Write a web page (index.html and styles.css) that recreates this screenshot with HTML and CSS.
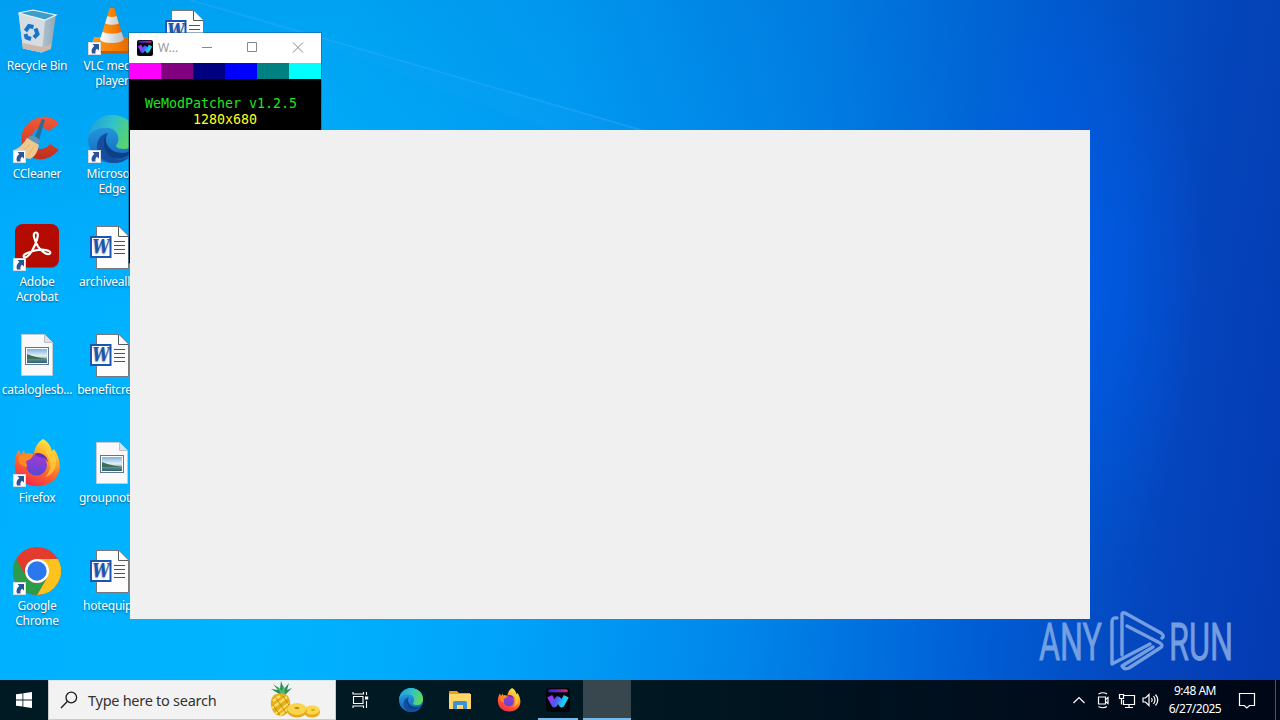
FILE: index.html
```html
<!DOCTYPE html>
<html lang="en">
<head>
    <meta charset="UTF-8">
    <meta name="viewport" content="width=device-width, initial-scale=1.0">
    <title>Desktop</title>
    <link rel="stylesheet" href="styles.css">
</head>
<body>
    <!-- shared icons -->
    <svg class="sprite" width="0" height="0">
        <defs>
            <linearGradient id="binSide" x1="0" x2="1">
                <stop offset="0" stop-color="#c3d3dc"/>
                <stop offset=".6" stop-color="#b3c4ce"/>
                <stop offset="1" stop-color="#8fa9b8"/>
            </linearGradient>
            <linearGradient id="coneOrange" x1="0" x2="1">
                <stop offset="0" stop-color="#ff9a1f"/>
                <stop offset=".6" stop-color="#f57c00"/>
                <stop offset="1" stop-color="#d85f00"/>
            </linearGradient>
            <linearGradient id="coneWhite" x1="0" x2="1">
                <stop offset="0" stop-color="#ffffff"/>
                <stop offset="1" stop-color="#b9bec2"/>
            </linearGradient>
            <linearGradient id="ccRed" x1="0" y1="0" x2="0" y2="1">
                <stop offset="0" stop-color="#f25a38"/>
                <stop offset="1" stop-color="#bf2d1d"/>
            </linearGradient>
            <linearGradient id="edgeTop" x1="0" y1=".2" x2="1" y2=".5">
                <stop offset="0" stop-color="#1d9de0"/>
                <stop offset=".5" stop-color="#31c3c6"/>
                <stop offset="1" stop-color="#62d957"/>
            </linearGradient>
            <linearGradient id="edgeLeft" x1="0" y1="0" x2="0" y2="1">
                <stop offset="0" stop-color="#2aa9e6"/>
                <stop offset="1" stop-color="#1263bd"/>
            </linearGradient>
            <linearGradient id="ffBody" x1=".8" y1="0" x2=".3" y2="1">
                <stop offset="0" stop-color="#fff44f"/>
                <stop offset=".3" stop-color="#ffb42c"/>
                <stop offset=".6" stop-color="#ff6a2a"/>
                <stop offset="1" stop-color="#f0264f"/>
            </linearGradient>
            <linearGradient id="ffGlobe" x1="0" y1="0" x2="0" y2="1">
                <stop offset="0" stop-color="#a23ad8"/>
                <stop offset="1" stop-color="#5b48cf"/>
            </linearGradient>
            <linearGradient id="photo" x1="0" y1="0" x2="0" y2="1">
                <stop offset="0" stop-color="#7eb2df"/>
                <stop offset=".5" stop-color="#e6f2f7"/>
                <stop offset=".75" stop-color="#5c8a8c"/>
                <stop offset="1" stop-color="#2c5e78"/>
            </linearGradient>
            <linearGradient id="wemodGrad" gradientUnits="userSpaceOnUse" x1="3" x2="29" y1="10" y2="20">
                <stop offset="0" stop-color="#b72cf5"/>
                <stop offset=".45" stop-color="#4f59f6"/>
                <stop offset=".75" stop-color="#1fc3f2"/>
                <stop offset="1" stop-color="#12e6e0"/>
            </linearGradient>
            <linearGradient id="wemodBar" gradientUnits="userSpaceOnUse" x1="4" x2="28" y1="4" y2="4">
                <stop offset="0" stop-color="#3b1fd0"/>
                <stop offset=".5" stop-color="#7422c9"/>
                <stop offset="1" stop-color="#e0225a"/>
            </linearGradient>

            <symbol id="shortcut" viewBox="0 0 13 13">
                <rect x=".5" y=".5" width="12" height="12" fill="#fff" stroke="#d5dbe1"/>
                <path d="M4.500 2h6.500v6.500L9 6.800C7.800 7.600 7.200 9 7.500 11.500H4C2.800 8.500 4 5.800 6.300 4z" fill="#2a5596"/>
            </symbol>

            <symbol id="bin" viewBox="0 0 48 48">
                <path d="M5.500 6L20 3l23 5-5 34-10 3.500-18-4z" fill="url(#binSide)"/>
                <path d="M5.500 6L20 3l23 5-11 5z" fill="#3f9cc8"/>
                <path d="M5.500 6L32 13l-3 32.500-19-4z" fill="#d5dde3"/>
                <path d="M9.500 36l20 4-.5 5.500-19-4zM29.500 40l9-3-.7 5-8.800 3.500z" fill="#cdb8aa"/>
                <path d="M5.500 6L32 13l11-5-23-5z" fill="none" stroke="#e8f4fa" stroke-width="1.200"/>
                <g fill="none" stroke="#1674cb" stroke-width="4">
                    <path d="M12.500 24l3.500-5 4.500 1"/>
                    <path d="M22.500 21.500l2 5.500-3.500 3.500"/>
                    <path d="M18 32l-4.500-1.500-1-3.500"/>
                </g>
            </symbol>

            <symbol id="vlc" viewBox="0 0 48 48">
                <path d="M6 30h36l5 16H1z" fill="url(#coneOrange)"/>
                <path d="M1 44h46v2.500H1z" fill="#c65a00"/>
                <path d="M21.500 1.500q2.500-1.500 5 0L36 33q-1 4-12 4T12 33z" fill="url(#coneOrange)"/>
                <path d="M19.500 9q4.500 1.800 9 0l2.300 7.500q-6.800 2.500-13.600 0zM14.500 25q9.500 3.500 19 0L36 32q-1 4-12 4t-12-4z" fill="url(#coneWhite)"/>
            </symbol>

            <symbol id="ccleaner" viewBox="0 0 48 48">
                <path d="M46 9Q37-2 24 3 10 8 8.500 22 8 37 20 43q14 5 26-8l-9-6q-6 7-13 4-6-4-5-12 2-8 9-8 5 0 8 3z" fill="url(#ccRed)"/>
                <path d="M29 4l3 1-7 23-5-2z" fill="#2a6c9b"/>
                <path d="M17 21q6-1 10 5l-3 6-12-7z" fill="#5b97bb"/>
                <path d="M14 23l12 7q-2 11-9 14Q7 43 1 35q8-3 13-12z" fill="#f0c88e"/>
                <path d="M17 29l-9 9M21 31l-7 11" stroke="#e4b673" stroke-width="1"/>
            </symbol>

            <symbol id="edge" viewBox="0 0 48 48">
                <circle cx="24" cy="24" r="24" fill="url(#edgeLeft)"/>
                <path d="M0 24C1 10 11 0 24 0c14 0 24 10 24 22 0 8-6 12-12 12-8 0-9-3-7-5 3-4 2-14-8-16C10 12 2 16 0 24z" fill="url(#edgeTop)"/>
                <path d="M20 18c-7 5-6 20 5 25 8 4 15 0 19-5-3 7-12 11-20 10C13 46 8 38 9 30c1-7 5-11 11-12z" fill="#154e9f"/>
                <path d="M20 18c-6 9 2 20 14 20 5 0 8-2 11-4-3 8-12 11-20 9-11-5-12-20-5-25z" fill="#0f3f87"/>
            </symbol>

            <symbol id="acrobat" viewBox="0 0 48 48">
                <rect x="2" y="2" width="44" height="43" rx="8" fill="#7b1714" opacity=".5"/>
                <rect x="2" y="1" width="44" height="43" rx="8" fill="#b30b00"/>
                <path d="M23 9.500c-4 0-2 7 2 14 4 6 10 9 12 7 2-3-7-5-15-3S9 32 11 34c3 2 8-5 11-12s4-12.500 1-12.500z" fill="none" stroke="#fff" stroke-width="2.200"/>
            </symbol>

            <symbol id="word" viewBox="0 0 48 48">
                <path d="M8.500 3.500h22l10 10v32h-32z" fill="#fdfdfd" stroke="#76797c"/>
                <path d="M30.500 3.500v10h10" fill="#fff" stroke="#55585b"/>
                <path d="M26 18.500h11M26 22.500h11M26 26.500h11M26 30.500h11" stroke="#1e59b0"/>
                <rect x="3" y="14" width="19.500" height="20" fill="#fff" stroke="#1955b3" stroke-width="2"/>
                <text x="13" y="30" text-anchor="middle" textLength="17" lengthAdjust="spacingAndGlyphs" class="word-mark">W</text>
            </symbol>

            <symbol id="image" viewBox="0 0 48 48">
                <path d="M8.500 3.500h23l8 8v33h-31z" fill="#f9f9f9" stroke="#c4cbd0"/>
                <path d="M31.500 3.500v8h8" fill="#dbe1e4" stroke="#b8c1c7"/>
                <rect x="12.500" y="16.500" width="23" height="17" fill="#fff" stroke="#5d788b"/>
                <rect x="14" y="18" width="20" height="14" fill="url(#photo)"/>
                <path d="M14 23q7 3 20 5H14z" fill="#3e6e54"/>
            </symbol>

            <symbol id="firefox" viewBox="0 0 48 48">
                <path d="M30 0c7 4 8 9 9 12l2-2c7 10 8 22 1 30-8 9-26 10-35 0C0 32 0 19 6 11l2 5 3-5 1 4c3-1 7-1 9 1 0-7 4-13 9-16z" fill="url(#ffBody)"/>
                <circle cx="23.500" cy="26" r="10.500" fill="url(#ffGlobe)"/>
                <path d="M5 20c3-6 10-6 15-4-1 4-4 5-8 6 1 2 2 3 2 6-5-1-8-3-9-8z" fill="#ff8a22"/>
                <path d="M21 15c6-3 13 1 14 8-3-4-5-5-9-5z" fill="#6a2bb8"/>
                <path d="M33 14c6 8 6 18-1 24 6-1 12-8 11-17-2-8-8-9-9-15z" fill="#ffd23a" opacity=".75"/>
            </symbol>

            <symbol id="chrome" viewBox="0 0 48 48">
                <circle cx="24" cy="24" r="24" fill="#e33b2e"/>
                <path d="M24 12h20.800A24 24 0 0 1 24 48l10.400-18z" fill="#fcc31e"/>
                <path d="M3.200 12l10.400 18A12 12 0 0 0 34.400 30L24 48A24 24 0 0 1 3.200 12z" fill="#2a9c4a"/>
                <circle cx="24" cy="24" r="12" fill="#fff"/>
                <circle cx="24" cy="24" r="9.700" fill="#2b78ee"/>
            </symbol>

            <symbol id="wemod" viewBox="0 0 32 32">
                <rect width="32" height="32" rx="4" fill="#05060c"/>
                <path d="M5 3.500h22" stroke="url(#wemodBar)" stroke-width="4" stroke-linecap="round"/>
                <path d="M5 11l6 11 5-7 5 7 6-11" fill="none" stroke="url(#wemodGrad)" stroke-width="7.500" stroke-linejoin="round"/>
            </symbol>

            <symbol id="folder" viewBox="0 0 24 24">
                <path d="M1 4q0-1 1-1h7l2 2h11v16H1z" fill="#e7a11c"/>
                <path d="M1 6h22v15H1z" fill="#ffd767"/>
                <path d="M5 21v-6q0-2 2-2h10q2 0 2 2v6h-4v-4H9v4z" fill="#3a93d5"/>
            </symbol>
        </defs>
    </svg>

    <div class="desktop">
        <svg class="rays" width="1280" height="680" viewBox="0 0 1280 680">
            <path d="M200 0L660 134 560 134z" fill="#2aa9ff" opacity=".1"/>
            <path d="M190 0L655 134" stroke="#41b6ff" stroke-width="1.500" opacity=".3"/>
        </svg>

        <ul class="icons">
            <li><div class="pic"><svg><use href="#bin"/></svg></div><span>Recycle Bin</span></li>
            <li><div class="pic"><svg><use href="#ccleaner"/></svg><svg class="arrow"><use href="#shortcut"/></svg></div><span>CCleaner</span></li>
            <li><div class="pic"><svg><use href="#acrobat"/></svg><svg class="arrow"><use href="#shortcut"/></svg></div><span>Adobe Acrobat</span></li>
            <li><div class="pic"><svg><use href="#image"/></svg></div><span>cataloglesb...</span></li>
            <li><div class="pic"><svg><use href="#firefox"/></svg><svg class="arrow"><use href="#shortcut"/></svg></div><span>Firefox</span></li>
            <li><div class="pic"><svg><use href="#chrome"/></svg><svg class="arrow"><use href="#shortcut"/></svg></div><span>Google Chrome</span></li>
            <li><div class="pic"><svg><use href="#vlc"/></svg><svg class="arrow"><use href="#shortcut"/></svg></div><span>VLC media player</span></li>
            <li><div class="pic"><svg><use href="#edge"/></svg><svg class="arrow"><use href="#shortcut"/></svg></div><span>Microsoft Edge</span></li>
            <li><div class="pic"><svg><use href="#word"/></svg></div><span class="file">archiveall...</span></li>
            <li><div class="pic"><svg><use href="#word"/></svg></div><span class="file">benefitcre...</span></li>
            <li><div class="pic"><svg><use href="#image"/></svg></div><span class="file">groupnot...</span></li>
            <li><div class="pic"><svg><use href="#word"/></svg></div><span>hotequip...</span></li>
            <li><div class="pic"><svg><use href="#word"/></svg></div></li>
        </ul>

        <div class="window console">
            <div class="titlebar">
                <svg class="app-icon" width="16" height="16"><use href="#wemod"/></svg>
                <span class="title">W...</span>
                <svg class="controls" width="136" height="30" viewBox="0 0 136 30" fill="none" stroke="#888">
                    <path d="M18 14.500h10"/>
                    <path d="M63.500 9.500h9v9h-9z"/>
                    <path d="M109 9.500l10 10M119 9.500l-10 10"/>
                </svg>
            </div>
            <div class="swatches">
                <i class="magenta"></i><i class="purple"></i><i class="navy"></i><i class="blue"></i><i class="teal"></i><i class="cyan"></i>
            </div>
            <pre class="output">

  <b class="green">WeModPatcher v1.2.5</b>
        <b class="yellow">1280x680</b></pre>
        </div>

        <div class="window blank"></div>

        <svg class="watermark" width="200" height="72" viewBox="0 0 200 72">
            <g class="watermark-text">
                <text x="0" y="51" textLength="63" lengthAdjust="spacingAndGlyphs">ANY</text>
                <text x="130" y="51" textLength="64" lengthAdjust="spacingAndGlyphs">RUN</text>
            </g>
            <g fill="none" stroke="#88aee6" stroke-width="3.400" stroke-linejoin="round" stroke-linecap="round">
                <path d="M78 9q-5-1-5 4v42l38-20"/>
                <path d="M83 46V5q0-2 3-1l36 20q4 3 1 5"/>
                <path d="M88 17l33 17q4 3 0 5L90 59q-5 2-7-2l31-19"/>
            </g>
        </svg>
    </div>

    <div class="taskbar">
        <div class="start">
            <svg width="16" height="16" viewBox="0 0 16 16" fill="#fff">
                <path d="M0 2.300l6.500-.9v6.200H0zM7.300 1.300L16 0v7.600H7.300zM0 8.400h6.500v6.200L0 13.700zM7.300 8.400H16V16l-8.700-1.300z"/>
            </svg>
        </div>
        <div class="search">
            <svg class="glass" width="18" height="18" viewBox="0 0 18 18" fill="none" stroke="#1b1b1b" stroke-width="1.300">
                <circle cx="11.300" cy="6.500" r="5.300"/>
                <path d="M7.500 10.300L1 17"/>
            </svg>
            <span>Type here to search</span>
            <svg class="pineapple" width="52" height="38" viewBox="0 0 52 38">
                <path d="M12 14L2 8l7 1-5-6 7 5 1-8 3 8 5-6-2 7 5-2-7 7z" fill="#2b8f55"/>
                <path d="M12 13L8 5l5 5 2-6 1 9z" fill="#55b96d"/>
                <path d="M5 14q8-4 14 1 4 7 1 15-4 6-10 5-6-2-8-10-1-7 3-11z" fill="#e6ad1e"/>
                <path d="M4 20l7-5M3 27l15-11M6 33l14-11M10 35l10-8" stroke="#ffe25a" stroke-width="2.200"/>
                <path d="M7 17l10 15M14 15l6 9M4 24l7 10" stroke="#b87912" stroke-width=".8"/>
                <ellipse cx="43" cy="31" rx="8" ry="5.500" fill="#e8ac19"/>
                <ellipse cx="43" cy="29" rx="7.500" ry="4.500" fill="#fbd74e"/>
                <ellipse cx="28" cy="30" rx="10" ry="6.500" fill="#e5a71b"/>
                <ellipse cx="28" cy="28" rx="9.500" ry="6" fill="#fbd44d"/>
                <ellipse cx="28" cy="27" rx="2.500" ry="1" fill="#b98211"/>
                <ellipse cx="44" cy="29" rx="2" ry="1" fill="#dca320"/>
            </svg>
        </div>
        <div class="task-view">
            <svg width="17" height="18" viewBox="0 0 17 18" fill="none" stroke="#fff" stroke-width="1.100">
                <path d="M1.500 5.500h9.500v7h-9.500zM1 1v2h10.500V1M1 17v-2h10.500v2M14.500 1v3M14.500 10v7"/>
                <path d="M13 5.500h3.200v3H13z" fill="#fff" stroke="none"/>
            </svg>
        </div>
        <div class="apps">
            <div class="app"><svg width="24" height="24"><use href="#edge"/></svg></div>
            <div class="app"><svg width="24" height="24"><use href="#folder"/></svg></div>
            <div class="app"><svg width="24" height="24"><use href="#firefox"/></svg></div>
            <div class="app running"><svg width="24" height="24"><use href="#wemod"/></svg></div>
            <div class="app active"></div>
        </div>
        <div class="tray">
            <svg width="24" height="20" viewBox="0 0 24 20"><path d="M6.500 13l5.500-5.500 5.500 5.500"/></svg>
            <svg width="24" height="20" viewBox="0 0 24 20"><path d="M7.500 7h7v7h-7zM14.500 9.500l2.500-2v6l-2.500-2M7.500 4Q12 1.500 16 4M7.500 16.500q4.500 2.500 8.500 0"/></svg>
            <svg width="24" height="20" viewBox="0 0 24 20"><path d="M9 5.500h10.500v9H8.500V10M14 14.500v3M10 17.500h8M4.500 4.500h4v4h-4zM6.500 8.500v6"/></svg>
            <svg width="24" height="20" viewBox="0 0 24 20"><path d="M4 8h2.500L10 4.500v11L6.500 12H4zM12.500 8q1.500 2 0 4M14.500 6q3 4 0 8M16.500 4.500q4.500 5.500 0 11"/></svg>
        </div>
        <div class="clock">
            <span>9:48 AM</span>
            <span>6/27/2025</span>
        </div>
        <div class="notifications">
            <svg width="18" height="18" viewBox="0 0 18 18"><path d="M1.500 2.500h15v12h-5L8.800 17l-2.500-2.500H1.500z"/></svg>
        </div>
        <div class="show-desktop"></div>
    </div>
</body>
</html>
```

FILE: styles.css
```css
* {
    margin: 0;
    padding: 0;
    box-sizing: border-box;
}

body {
    width: 1280px;
    height: 720px;
    overflow: hidden;
    display: flex;
    flex-direction: column;
    font-family: "Noto Sans", "Open Sans", sans-serif;
    font-size: 12px;
}

.sprite {
    position: absolute;
}

.desktop {
    position: relative;
    height: 680px;
    overflow: hidden;
    background:
        radial-gradient(ellipse 130px 300px at 1075px 280px, rgba(0, 98, 250, 0.55), rgba(0, 90, 235, 0)),
        linear-gradient(to bottom, rgba(0, 70, 170, 0.16), rgba(0, 120, 230, 0) 45%),
        linear-gradient(97deg, #00b0ff 0%, #00b4ff 25%, #00a4fa 42%, #0086ea 60%, #005fd6 77%, #0445bd 90%, #043ab2 100%);
}

.rays {
    position: absolute;
    left: 0;
    top: 0;
}

/* desktop icons */
.icons {
    list-style: none;
    display: grid;
    grid-auto-flow: column;
    grid-template-rows: repeat(6, 108px);
    grid-auto-columns: 74px;
    column-gap: 1px;
    justify-content: start;
}

.icons li {
    display: flex;
    flex-direction: column;
    align-items: center;
    padding-top: 7px;
    text-align: center;
    line-height: 15px;
    letter-spacing: -0.25px;
    color: #fff;
    text-shadow: 0 1px 2px rgba(0, 0, 0, 0.5);
}

.icons span {
    margin-top: 3px;
    max-width: 72px;
}

.icons .file {
    padding-right: 6px;
    white-space: nowrap;
}

.pic {
    position: relative;
    width: 48px;
    height: 48px;
}

.pic svg {
    display: block;
    width: 48px;
    height: 48px;
}

.pic .arrow {
    position: absolute;
    left: 0;
    bottom: 0;
    width: 13px;
    height: 13px;
}

.word-mark {
    font: italic bold 19px "DejaVu Serif", serif;
    letter-spacing: 0;
    fill: #1955b3;
}

/* windows */
.window {
    position: absolute;
}

.console {
    left: 129px;
    top: 33px;
    width: 192px;
    height: 230px;
    background: #000;
    box-shadow: 0 0 0 1px rgba(20, 80, 130, 0.45);
}

.titlebar {
    display: flex;
    align-items: center;
    height: 30px;
    padding-left: 8px;
    background: #fff;
    color: #999;
}

.title {
    flex: none;
    width: 22px;
    margin: 0 0 1px 5px;
    white-space: nowrap;
}

.app-icon {
    flex: none;
    margin-bottom: 1px;
}

.controls {
    flex: none;
    margin-left: 4px;
}

.swatches {
    display: flex;
    height: 16px;
}

.swatches i {
    flex: 1;
}

.magenta { background: #ff00ff; }
.purple { background: #800080; }
.navy { background: #000080; }
.blue { background: #0000ff; }
.teal { background: #008080; }
.cyan { background: #00ffff; }

.output {
    padding-top: 1px;
    font-family: "DejaVu Sans Mono", monospace;
    font-size: 13.29px;
    line-height: 16px;
}

.output b {
    font-weight: normal;
}

.green { color: #1ee61e; }
.yellow { color: #ffff1e; }

.blank {
    left: 130px;
    top: 130px;
    width: 960px;
    height: 489px;
    background: #f0f0f0;
}

.watermark {
    position: absolute;
    right: 41px;
    bottom: -1px;
    overflow: visible;
    opacity: 0.85;
}

.watermark-text {
    font-family: Roboto, sans-serif;
    font-size: 51px;
    fill: #88aee6;
    stroke: #88aee6;
    stroke-width: 0.8;
}

/* taskbar */
.taskbar {
    display: flex;
    height: 40px;
    background: linear-gradient(to right, #001a24, #001822 50%, #000d1c 80%, #000716);
    color: #fff;
}

.start,
.task-view,
.app,
.notifications {
    display: flex;
    align-items: center;
    justify-content: center;
    width: 48px;
}

.search {
    display: flex;
    align-items: center;
    width: 288px;
    padding: 0 14px 0 11px;
    background: #f2f2f2;
    border: 1px solid #c9cccd;
    border-top-color: #dfe8ec;
    color: #333;
    font-size: 14.5px;
    letter-spacing: -0.27px;
}

.search span {
    margin-left: 10px;
    white-space: nowrap;
}

.pineapple {
    margin-left: auto;
}

.apps {
    display: flex;
    gap: 1px;
    margin-left: 3px;
}

.running {
    position: relative;
}

.running::after {
    content: '';
    position: absolute;
    left: 4px;
    right: 4px;
    bottom: 0;
    height: 2px;
    background: #76b9ed;
}

.active {
    background: #38464e;
    border-bottom: 2px solid #76b9ed;
}

.tray {
    display: flex;
    align-items: center;
    margin-left: auto;
}

.tray svg,
.notifications svg {
    fill: none;
    stroke: #fff;
    stroke-width: 1.2;
}

.clock {
    display: flex;
    flex-direction: column;
    align-items: center;
    width: 64px;
    padding-top: 2px;
    line-height: 18px;
    letter-spacing: -0.5px;
}

.notifications {
    margin-left: -4px;
}

.show-desktop {
    width: 5px;
    margin-left: 4px;
    border-left: 1px solid #4d5763;
}
```
